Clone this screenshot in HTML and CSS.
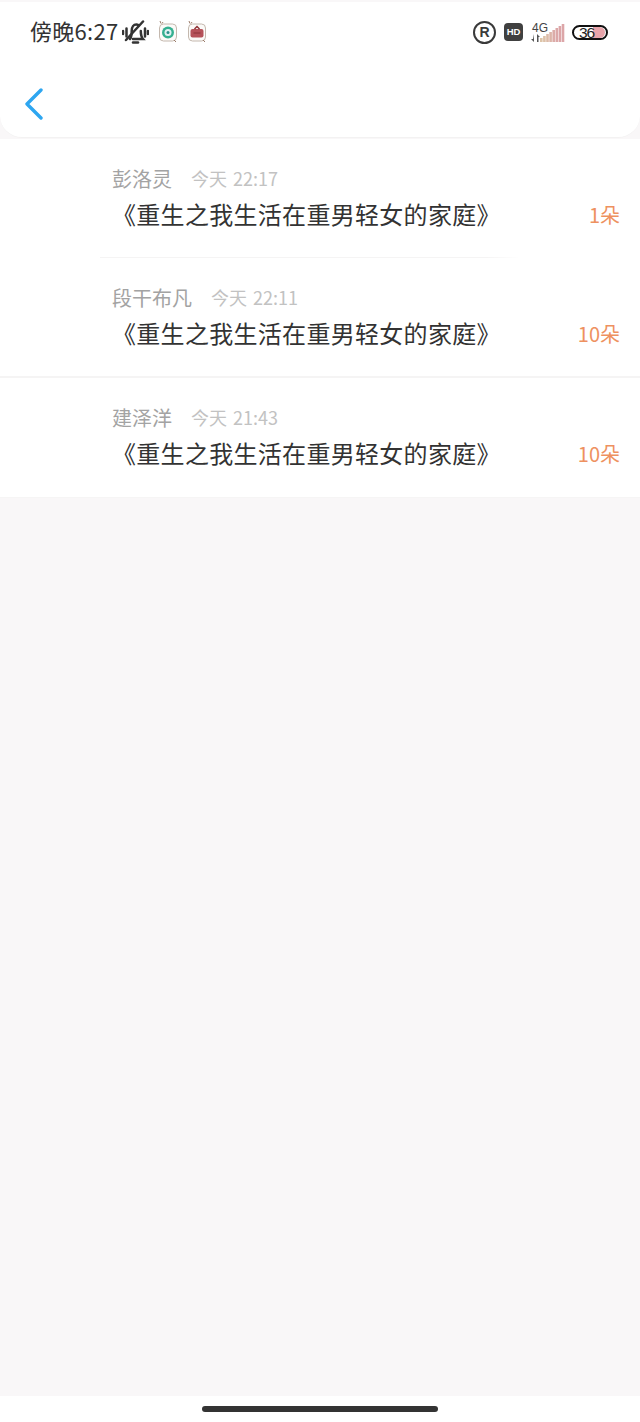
FILE: index.html
```html
<!DOCTYPE html>
<html lang="zh-CN">
<head>
  <meta charset="UTF-8">
  <meta name="viewport" content="width=device-width, initial-scale=1.0">
  <title>送花记录</title>
  <link rel="stylesheet" href="styles.css">
</head>
<body>
  <div class="page">
    <header class="top">
      <div class="status">
        <div class="status-left">
          <span class="clock">傍晚6:27</span>
          <svg class="mute" width="27" height="24" viewBox="0 0 27 24" fill="none" stroke="#333" stroke-width="2.500" stroke-linecap="round">
            <path d="M1 11v3M4.500 8.500v8M23 8.500v8M26 11v3"/>
            <path d="M8 19c1.500-2 1.700-4.500 1.700-8 0-4 2-6.500 4.500-6.500 1 0 1.800.3 2.500.8M18.800 11c0 3 .4 6 2.200 8H11"/>
            <path d="M11 22.500h5"/>
            <path d="M4 20 21 1.500"/>
          </svg>
          <svg class="app" width="20" height="22" viewBox="0 0 20 22" fill="none">
            <rect x="1.500" y="3" width="17" height="17" rx="4" fill="#fbfaf8" stroke="#c4b8ae"/>
            <circle cx="10" cy="11.500" r="6" fill="#35b090"/>
            <circle cx="10" cy="11.500" r="3.500" fill="#dff1f2"/>
            <circle cx="10" cy="11.500" r="1.500" fill="#2a8f8a"/>
            <path d="M2 0l1 2.500M5 1 4 2.500M16 19l2 2" stroke="#9a7b68"/>
          </svg>
          <svg class="app" width="20" height="22" viewBox="0 0 20 22" fill="none">
            <rect x="1.500" y="3" width="17" height="17" rx="4" fill="#fbfaf8" stroke="#c4b8ae"/>
            <rect x="3.500" y="8" width="13" height="8.500" rx="2" fill="#b5525a"/>
            <path d="M7.500 8 10 5.500 12.500 8" stroke="#8e3436" stroke-width="1.500"/>
            <path d="M6.500 12h7" stroke="#8a3338"/>
            <path d="M2 0l1 2.500M5 1 4 2.500M16 19l2 2" stroke="#9a7b68"/>
          </svg>
        </div>
        <div class="status-right">
          <span class="reg">R</span>
          <span class="hd">HD</span>
          <span class="net">
            <span class="net-type">
              <span class="net-label">4G</span>
              <svg width="9" height="8" viewBox="0 0 9 8" fill="#555">
                <path d="M3 0v8L0 5h2zM6 0l3 3H7.500v5H6z"/>
              </svg>
            </span>
            <svg class="bars" width="25" height="18" viewBox="0 0 25 18">
              <rect x="0" y="14" width="2.600" height="4" fill="#ddc4a8"/>
              <rect x="3.100" y="12" width="2.600" height="6" fill="#ddc0a8"/>
              <rect x="6.200" y="10" width="2.600" height="8" fill="#dcbba8"/>
              <rect x="9.300" y="8" width="2.600" height="10" fill="#dcb4a8"/>
              <rect x="12.400" y="6" width="2.600" height="12" fill="#dcaca8"/>
              <rect x="15.500" y="4" width="2.600" height="14" fill="#dca8a8"/>
              <rect x="18.600" y="2" width="2.600" height="16" fill="#dca6a8"/>
              <rect x="21.700" y="0" width="2.600" height="18" fill="#dca6a8"/>
            </svg>
          </span>
          <span class="battery"><span class="battery-fill"></span><span class="battery-text">36</span></span>
        </div>
      </div>
      <div class="nav">
        <svg width="20" height="32" viewBox="0 0 20 32" fill="none" stroke="#2ea6f0" stroke-width="3.400" stroke-linecap="round" stroke-linejoin="round">
          <path d="M17 2 3 16l14 14"/>
        </svg>
      </div>
    </header>

    <section class="list">
      <div class="item">
        <div class="item-main item-line">
          <div class="meta"><span class="name">彭洛灵</span><span class="time">今天 22:17</span></div>
          <div class="title-row"><span class="title">《重生之我生活在重男轻女的家庭》</span><span class="count">1朵</span></div>
        </div>
      </div>
      <div class="item item-full">
        <div class="item-main">
          <div class="meta"><span class="name">段干布凡</span><span class="time">今天 22:11</span></div>
          <div class="title-row"><span class="title">《重生之我生活在重男轻女的家庭》</span><span class="count">10朵</span></div>
        </div>
      </div>
      <div class="item">
        <div class="item-main">
          <div class="meta"><span class="name">建泽洋</span><span class="time">今天 21:43</span></div>
          <div class="title-row"><span class="title">《重生之我生活在重男轻女的家庭》</span><span class="count">10朵</span></div>
        </div>
      </div>
    </section>

    <div class="spacer"></div>

    <footer class="home-area">
      <div class="home-bar"></div>
    </footer>
  </div>
</body>
</html>
```

FILE: styles.css
```css
* {
  box-sizing: border-box;
}
html, body {
  margin: 0;
  padding: 0;
}
body {
  background: #f9f7f8;
  font-family: "Noto Sans CJK SC", "Noto Sans", sans-serif;
}
.page {
  display: flex;
  flex-direction: column;
  height: 1422px;
  padding-top: 2px;
}

/* header + status bar */
.top {
  height: 136px;
  background: #fff;
  border-radius: 0 0 22px 22px;
  border-bottom: 1px solid #f3f2f2;
}
.status {
  display: flex;
  justify-content: space-between;
  align-items: center;
  height: 32px;
  margin-top: 14px;
  padding: 0 32px 0 30px;
}
.status-left, .status-right {
  display: flex;
  align-items: center;
}
.clock {
  font-size: 22px;
  line-height: 32px;
  letter-spacing: 0.300px;
  color: #333;
  padding-bottom: 4px;
}
.mute {
  margin-left: 3px;
}
.app {
  margin-left: 9px;
}
.reg {
  width: 23px;
  height: 23px;
  border: 2.500px solid #3a3a3a;
  border-radius: 50%;
  display: flex;
  align-items: center;
  justify-content: center;
  font: bold 14px "Liberation Sans", sans-serif;
  color: #3a3a3a;
}
.hd {
  width: 19px;
  height: 18px;
  margin-left: 8px;
  background: #404040;
  border-radius: 4px;
  color: #fff;
  font: bold 9.500px/18px "Liberation Sans", sans-serif;
  text-align: center;
}
.net {
  display: flex;
  align-items: flex-end;
  height: 20px;
  margin-left: 8px;
}
.net-type {
  display: flex;
  flex-direction: column;
  align-items: flex-start;
  width: 16px;
  margin-right: -7px;
}
.net-label {
  margin-left: 1px;
  font: 12px/12px "Liberation Sans", sans-serif;
  color: #444;
}
.battery {
  position: relative;
  width: 36px;
  height: 15px;
  margin-left: 7px;
  border: 2px solid #111;
  border-radius: 8px;
  overflow: hidden;
}
.battery-fill {
  position: absolute;
  top: 0;
  bottom: 0;
  left: 19px;
  right: 1px;
  background: #e8a4aa;
  border-radius: 0 6px 6px 0;
}
.battery-text {
  position: absolute;
  left: 5px;
  top: -3px;
  font: 15.500px/17px "Liberation Sans", sans-serif;
  letter-spacing: -1px;
  color: #222;
}
.nav {
  padding: 40px 0 0 24px;
}
.nav svg {
  display: block;
}

/* rows */
.list {
  margin-top: 1px;
  background: #fff;
  border-bottom: 1px solid #f6f5f5;
}
.item {
  height: 119px;
}
.item-full {
  border-bottom: 2px solid #f5f4f4;
  height: 120px;
}
.item-main {
  height: 100%;
  padding: 23px 20px 0 112px;
  position: relative;
}
.item-line::after {
  content: "";
  position: absolute;
  left: 100px;
  bottom: 0;
  width: 420px;
  height: 1px;
  background: linear-gradient(to right, #f5f4f4 92%, #fff);
}
.meta {
  display: flex;
  align-items: center;
  height: 32px;
}
.name {
  font-size: 20px;
  color: #a3a3a3;
}
.time {
  margin-left: 19px;
  font-size: 18px;
  word-spacing: 2px;
  color: #c2c2c2;
}
.title-row {
  display: flex;
  justify-content: space-between;
  align-items: center;
  height: 36px;
  margin-top: 1px;
}
.title {
  font-size: 24px;
  letter-spacing: 0.300px;
  color: #333;
  white-space: nowrap;
}
.count {
  font-size: 20px;
  color: #ee9160;
  margin-top: 2px;
}

.spacer {
  flex: 1;
}

/* gesture bar */
.home-area {
  height: 26px;
  background: #fff;
  padding-top: 10px;
}
.home-bar {
  width: 236px;
  height: 6px;
  margin: 0 auto;
  background: #333;
  border-radius: 3px;
}
```
